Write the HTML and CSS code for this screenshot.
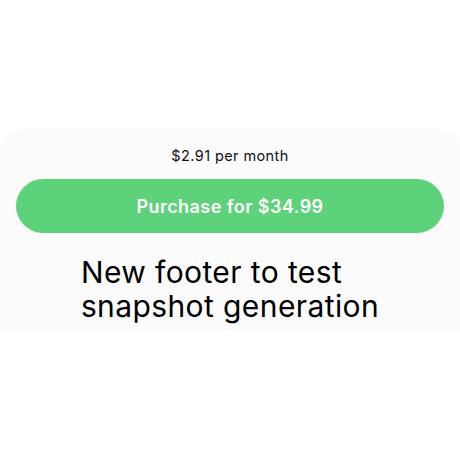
FILE: index.html
```html
<!DOCTYPE html>
<html>
<head>
<meta charset="utf-8">
<link rel="stylesheet" href="styles.css">
</head>
<body>
<div class="page">
  <section class="footer">
    <p class="price">$2.91 per month</p>
    <button class="buy">Purchase for $34.99</button>
    <div class="note-wrap">
      <p class="note">New footer to test<br>snapshot generation</p>
    </div>
  </section>
</div>
</body>
</html>
```

FILE: styles.css
```css
* { box-sizing: border-box; }
html, body { margin: 0; padding: 0; background: #ffffff; }
body {
  font-family: Inter, "Noto Sans", "Liberation Sans", sans-serif;
  color: #000;
  width: 460px;
  height: 460px;
  overflow: hidden;
}
.page { padding-top: 130px; }
.footer {
  background: #fbfbfb;
  border-radius: 22px 22px 0 0;
  padding: 16px 16px 8px;
  display: flex;
  flex-direction: column;
  align-items: stretch;
}
.price {
  margin: 0;
  text-align: center;
  font-size: 14.5px;
  letter-spacing: 0.4px;
  line-height: 20px;
  color: #111;
}
.buy {
  margin-top: 13px;
  height: 54px;
  border: none;
  border-radius: 27px;
  background: #5dd27a;
  color: #fff;
  font-family: inherit;
  font-size: 18px;
  letter-spacing: 0.45px;
  font-weight: 600;
  padding: 0;
}
.note-wrap {
  margin-top: 22px;
  display: flex;
  justify-content: center;
}
.note {
  margin: 0;
  font-size: 30px;
  letter-spacing: 0.4px;
  line-height: 34px;
  text-align: left;
  color: #000;
}
```
